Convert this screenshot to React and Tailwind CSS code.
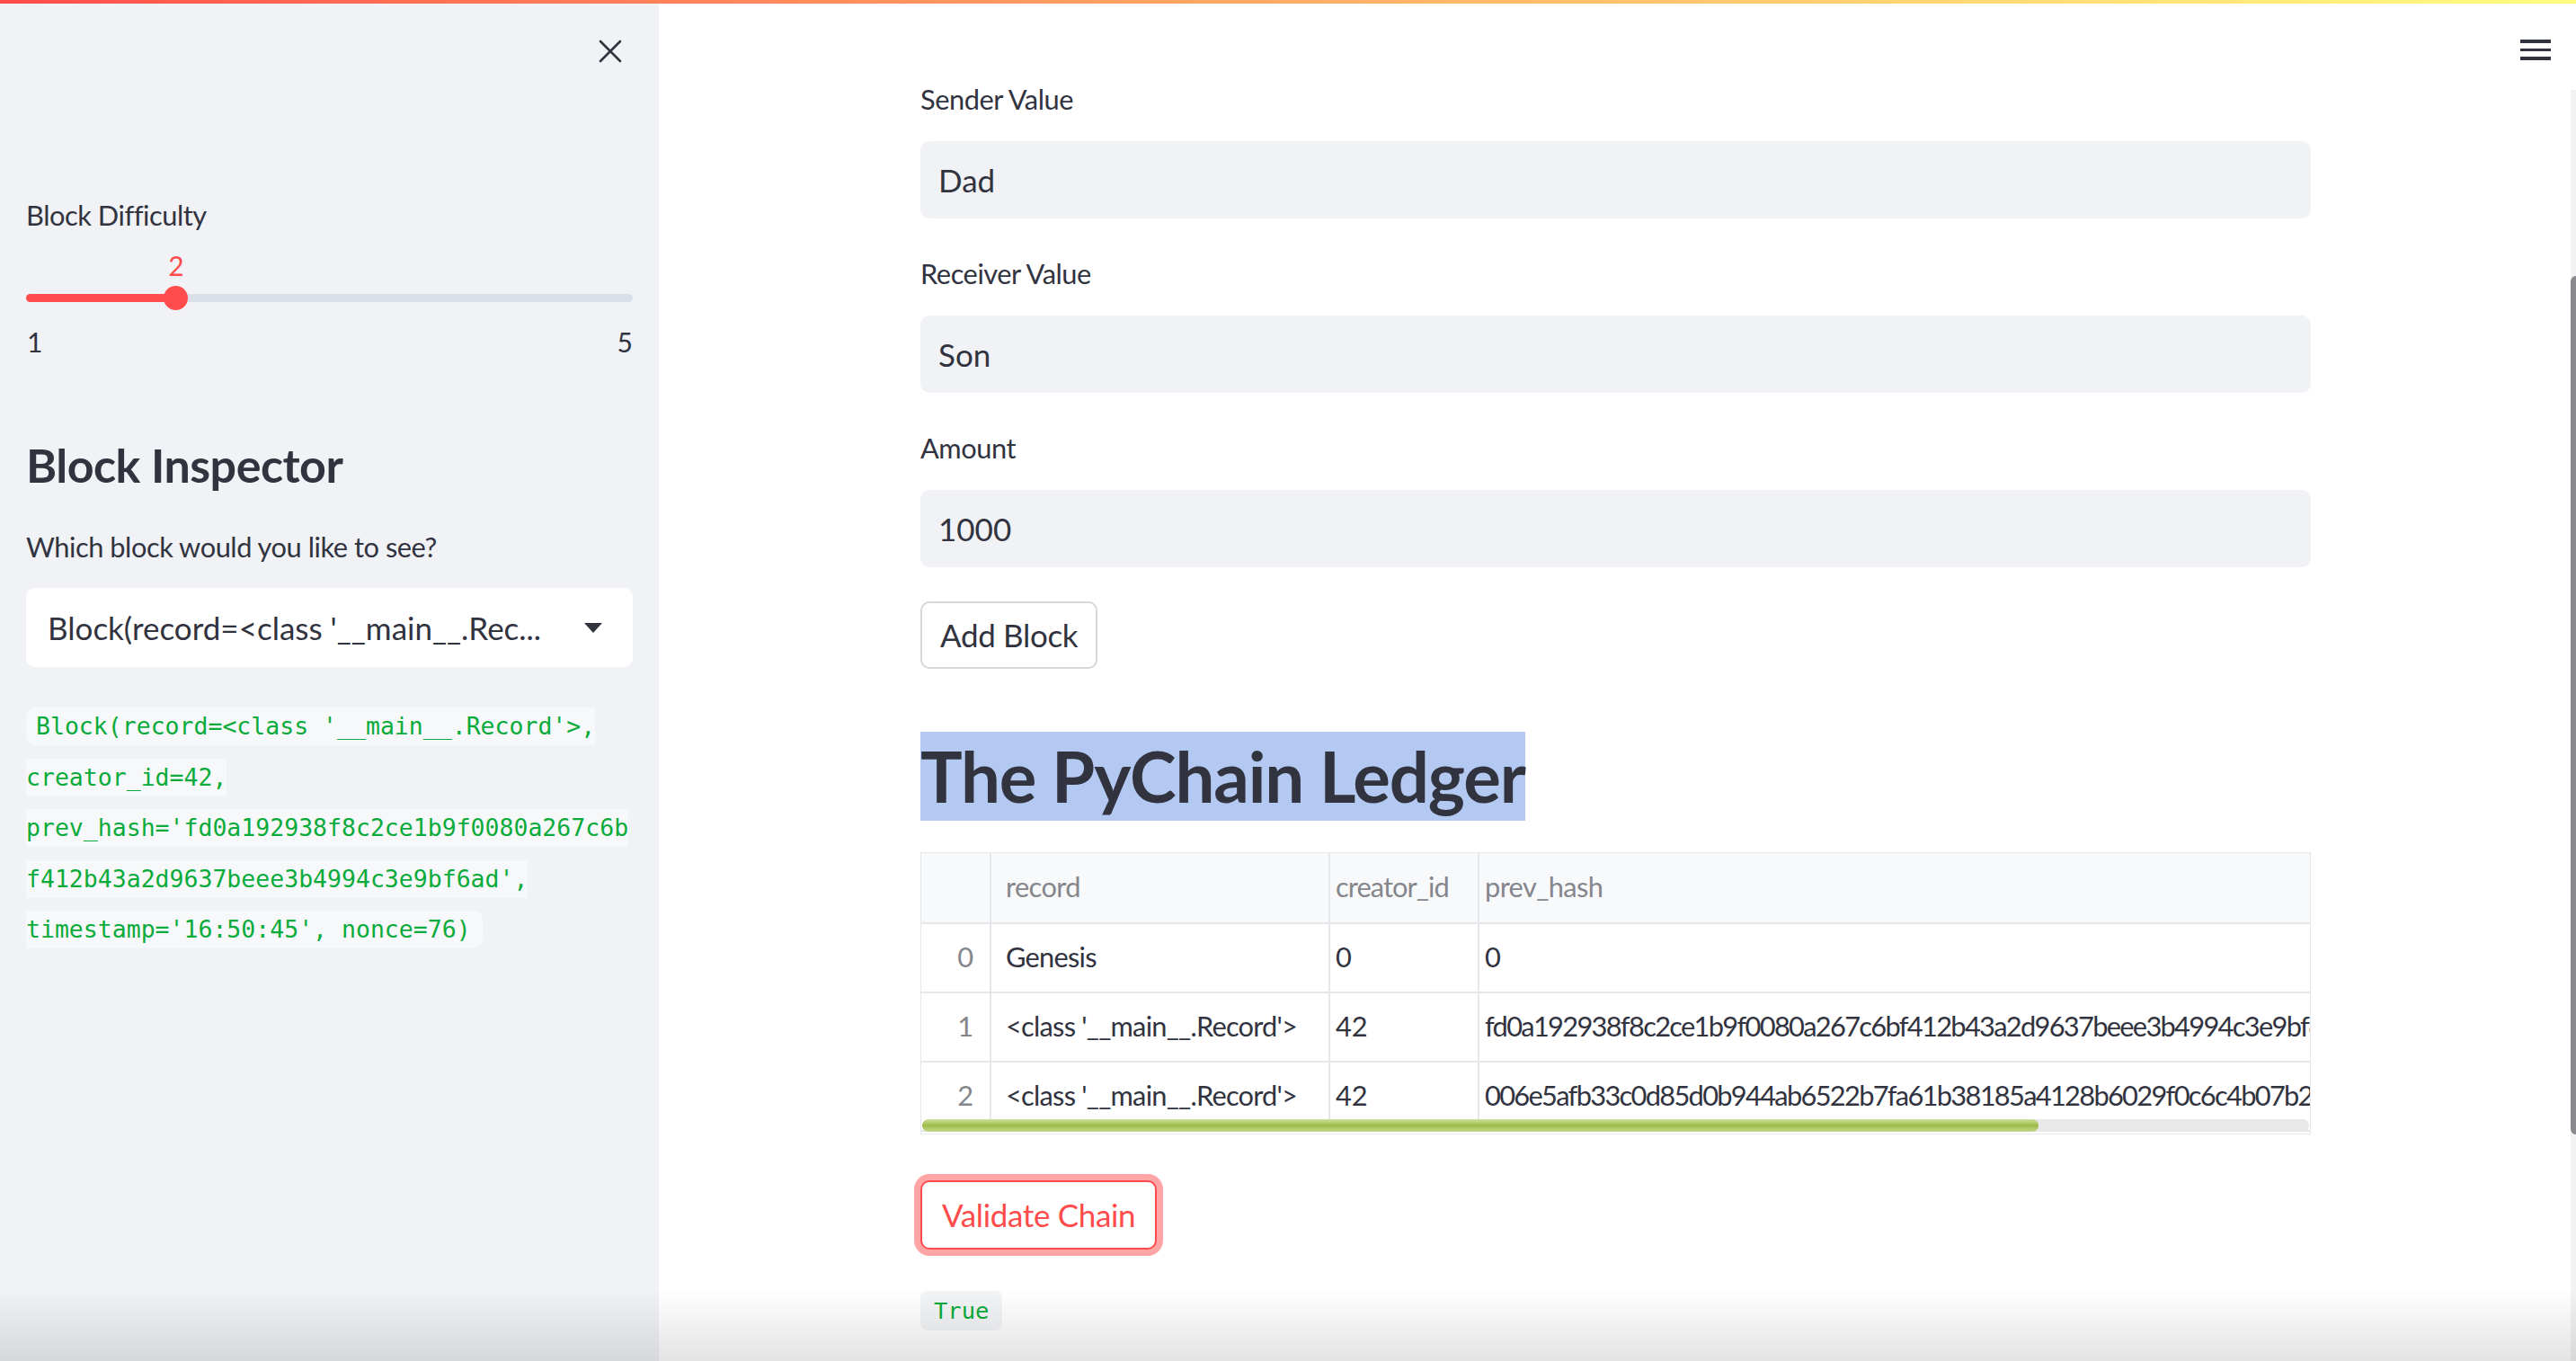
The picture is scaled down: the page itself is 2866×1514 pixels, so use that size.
import React from 'react';

const codeLines = [
  "Block(record=<class '__main__.Record'>,",
  'creator_id=42,',
  "prev_hash='fd0a192938f8c2ce1b9f0080a267c6b",
  "f412b43a2d9637beee3b4994c3e9bf6ad',",
  "timestamp='16:50:45', nonce=76)",
];

const rows = [
  { idx: 0, record: 'Genesis', creator: '0', hash: '0' },
  {
    idx: 1,
    record: "<class '__main__.Record'>",
    creator: '42',
    hash: 'fd0a192938f8c2ce1b9f0080a267c6bf412b43a2d9637beee3b4994c3e9bf6ad',
  },
  {
    idx: 2,
    record: "<class '__main__.Record'>",
    creator: '42',
    hash: '006e5afb33c0d85d0b944ab6522b7fa61b38185a4128b6029f0c6c4b07b2e91d',
  },
];

const Field = ({ label, value, first }) => (
  <div className={first ? '' : 'mt-[41px]'}>
    <div className="h-[43px] flex items-center text-[30.8px] text-[#31333f] tracking-[-0.015em]">{label}</div>
    <div className="mt-[24px] h-[86px] rounded-[10px] bg-[#f0f2f6] flex items-center pl-[20px] text-[35px] text-[#31333f]">
      {value}
    </div>
  </div>
);

const Sidebar = () => (
  <aside className="w-[733px] shrink-0 bg-[#f0f2f6] px-[29px] flex flex-col">
    {/* close */}
    <div className="pt-[40px] flex justify-end pr-[12px]">
      <svg width="26" height="26" viewBox="0 0 26 26" fill="none">
        <path d="M2 2L24 24M24 2L2 24" stroke="#31333f" strokeWidth="2.6" strokeLinecap="round" />
      </svg>
    </div>

    <div className="mt-[149px] h-[43px] flex items-center text-[30.8px] text-[#31333f] tracking-[-0.015em]">
      Block Difficulty
    </div>

    {/* slider */}
    <div className="mt-[18px] relative h-[30px] text-[30px] leading-[30px] text-[#ff4b4b]">
      <span className="absolute left-[167px] w-[0px] flex justify-center">2</span>
    </div>
    <div className="mt-[8px] relative h-[27px] flex items-center">
      <div className="w-full h-[9px] rounded-full bg-[#dbdfe7] flex">
        <div className="w-[167px] h-full rounded-full bg-[#ff4b4b]" />
      </div>
      <div className="absolute left-[153px] top-0 w-[27px] h-[27px] rounded-full bg-[#ff4b4b]" />
    </div>
    <div className="mt-[20px] h-[30px] flex justify-between items-center text-[30px] text-[#31333f]">
      <span className="pl-[1px]">1</span>
      <span>5</span>
    </div>

    <h2 className="mt-[91px] h-[62px] flex items-center text-[52px] font-bold text-[#31333f] tracking-[-0.01em]">
      Block Inspector
    </h2>

    <div className="mt-[40px] h-[43px] flex items-center text-[30.8px] text-[#31333f] tracking-[-0.015em]">
      Which block would you like to see?
    </div>

    <div className="mt-[23px] h-[88px] rounded-[10px] bg-white flex items-center justify-between pl-[24px] pr-[34px] text-[35px] text-[#31333f]">
      <span>Block(record=&lt;class '__main__.Rec...</span>
      <svg width="20" height="11" viewBox="0 0 20 11">
        <path d="M0 0H20L10 11Z" fill="#31333f" />
      </svg>
    </div>

    {/* code output */}
    <div className="mt-[45px] flex flex-col items-start gap-[14.5px] font-['DejaVu_Sans_Mono',monospace] text-[26.5px] text-[#09ab3b]">
      {codeLines.map((line, i) => (
        <span
          key={i}
          className={`h-[42px] flex items-center bg-[#f7f8fa] whitespace-pre ${
            i === 0 ? 'pl-[11px] rounded-l-[10px]' : ''
          } ${i === codeLines.length - 1 ? 'pr-[13px] rounded-r-[10px]' : ''}`}
        >
          {line}
        </span>
      ))}
    </div>
  </aside>
);

const Ledger = () => (
  <div className="mt-[35px] h-[314px] border border-[#e6e7eb] relative overflow-hidden text-[30.8px]">
    <div className="flex h-[79px] bg-[#f8f9fb] border-b-2 border-[#e6e7eb] text-[#85868c]">
      <div className="w-[78px] shrink-0 border-r-2 border-[#e6e7eb]" />
      <div className="w-[377px] shrink-0 border-r-2 border-[#e6e7eb] flex items-center pl-[16px] tracking-[-0.02em]">record</div>
      <div className="w-[166px] shrink-0 border-r-2 border-[#e6e7eb] flex items-center pl-[6px] tracking-[-0.03em]">creator_id</div>
      <div className="w-[1400px] shrink-0 flex items-center pl-[6px] tracking-[-0.02em]">prev_hash</div>
    </div>
    {rows.map((r) => (
      <div key={r.idx} className="flex h-[77px] border-b-2 border-[#e6e7eb] text-[#31333f]">
        <div className="w-[78px] shrink-0 border-r-2 border-[#e6e7eb] flex items-center justify-end pr-[18px] text-[#85868c]">
          {r.idx}
        </div>
        <div className="w-[377px] shrink-0 border-r-2 border-[#e6e7eb] flex items-center pl-[16px] whitespace-pre tracking-[-0.025em]">
          {r.record}
        </div>
        <div className="w-[166px] shrink-0 border-r-2 border-[#e6e7eb] flex items-center pl-[6px]">{r.creator}</div>
        <div className="w-[1400px] shrink-0 flex items-center pl-[6px] tracking-[-1.7px]">{r.hash}</div>
      </div>
    ))}
    {/* horizontal scrollbar */}
    <div className="absolute left-[1px] right-[1px] bottom-[2px] h-[14px] rounded-full bg-[#e8e8e8] flex">
      <div className="w-[1242px] h-full rounded-full bg-gradient-to-b from-[#cfe09c] via-[#9dbb45] to-[#c3d78a]" />
    </div>
  </div>
);

export default function App() {
  return (
    <div className="w-[2866px] h-[1514px] relative overflow-hidden flex flex-col bg-white font-['Lato','Noto_Sans',sans-serif]">
      <div className="h-[4px] shrink-0 bg-gradient-to-r from-[#ff4b4b] to-[#fffd80]" />
      <div className="flex flex-1 min-h-0">
        <Sidebar />
        <main className="flex-1 relative">
          <div className="ml-[291px] w-[1547px] pt-[86px]">
            <Field label="Sender Value" value="Dad" first />
            <Field label="Receiver Value" value="Son" />
            <Field label="Amount" value="1000" />

            <button className="mt-[38px] h-[75px] px-[20px] rounded-[10px] border-2 border-[#d6d7db] bg-white text-[35px] text-[#31333f] tracking-[-0.01em]">
              Add Block
            </button>

            <div className="mt-[70px]">
              <span className="inline-block h-[99px] leading-[99px] bg-[#b4c9f1] text-[78px] font-bold text-[#31333f] tracking-[-0.015em]">
                The PyChain Ledger
              </span>
            </div>

            <Ledger />

            <button className="mt-[51px] h-[77px] px-[22px] rounded-[10px] border-2 border-[#ff4b4b] bg-white text-[35px] text-[#ff4b4b] tracking-[-0.01em] shadow-[0_0_0_7px_rgba(255,75,75,0.5)]">
              Validate Chain
            </button>

            <div className="mt-[46px]">
              <span className="inline-flex items-center h-[44px] px-[15px] rounded-[8px] bg-[#f3f4f6] font-['DejaVu_Sans_Mono',monospace] text-[25.5px] text-[#09ab3b]">
                True
              </span>
            </div>
          </div>

          {/* header menu */}
          <div className="absolute top-[40px] right-[28px] flex flex-col gap-[6px]">
            <div className="w-[34px] h-[3.5px] bg-[#31333f]" />
            <div className="w-[34px] h-[3.5px] bg-[#31333f]" />
            <div className="w-[34px] h-[3.5px] bg-[#31333f]" />
          </div>

          {/* vertical scrollbar */}
          <div className="absolute right-0 top-[96px] bottom-0 w-[6px] bg-[#f2f2f2]">
            <div className="mt-[207px] h-[955px] w-full rounded-l-full bg-[#8a8a8e]" />
          </div>
        </main>
      </div>

      {/* bottom fade */}
      <div className="absolute left-0 right-0 bottom-0 h-[80px] bg-gradient-to-b from-transparent to-[rgba(0,0,0,0.11)] pointer-events-none" />
    </div>
  );
}
